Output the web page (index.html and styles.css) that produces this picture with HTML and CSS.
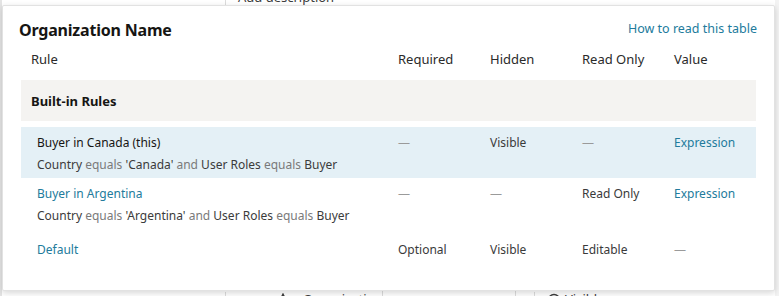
FILE: index.html
```html
<!DOCTYPE html>
<html lang="en">
<head>
<meta charset="utf-8">
<title>Organization Name</title>
<link rel="stylesheet" href="styles.css">
</head>
<body>
<div class="page">
  <div class="bg-strip bg-top">
    <div class="bg-cell"></div>
    <div class="bg-cell bg-desc">Add description</div>
  </div>
  <div class="bg-strip bg-bottom">
    <div class="bg-cell"></div>
    <div class="bg-cell bg-name">
      <svg class="bg-icon" width="14" height="14" viewBox="0 0 14 14"><path d="M7 1 L13 13 H1 Z" fill="none" stroke="#3d3d3d" stroke-width="1.3"/></svg>
      <span>Organization</span>
    </div>
    <div class="bg-cell"></div>
    <div class="bg-cell"></div>
    <div class="bg-cell bg-vis">
      <svg class="bg-icon" width="14" height="14" viewBox="0 0 14 14"><circle cx="7" cy="7" r="5.5" fill="none" stroke="#3d3d3d" stroke-width="1.4"/><circle cx="7" cy="7" r="2" fill="#3d3d3d"/></svg>
      <span>Visible</span>
    </div>
  </div>
</div>

<div class="popup">
  <div class="popup-head">
    <h2 class="popup-title">Organization Name</h2>
    <a class="link help-link" href="#">How to read this table</a>
  </div>
  <div class="rules">
    <div class="rules-row rules-header">
      <div class="cell cell-rule">Rule</div>
      <div class="cell">Required</div>
      <div class="cell">Hidden</div>
      <div class="cell">Read Only</div>
      <div class="cell">Value</div>
    </div>
    <div class="rules-group">Built-in Rules</div>
    <div class="rules-row rules-item is-current">
      <div class="cell cell-rule">
        <div class="rule-name">Buyer in Canada (this)</div>
        <div class="rule-cond">Country <span class="op">equals</span> 'Canada' <span class="op">and</span> User Roles <span class="op">equals</span> Buyer</div>
      </div>
      <div class="cell muted">—</div>
      <div class="cell">Visible</div>
      <div class="cell muted">—</div>
      <div class="cell"><a class="link" href="#">Expression</a></div>
    </div>
    <div class="rules-row rules-item">
      <div class="cell cell-rule">
        <a class="link rule-name" href="#">Buyer in Argentina</a>
        <div class="rule-cond">Country <span class="op">equals</span> 'Argentina' <span class="op">and</span> User Roles <span class="op">equals</span> Buyer</div>
      </div>
      <div class="cell muted">—</div>
      <div class="cell muted">—</div>
      <div class="cell">Read Only</div>
      <div class="cell"><a class="link" href="#">Expression</a></div>
    </div>
    <div class="rules-row rules-item rules-default">
      <div class="cell cell-rule">
        <a class="link rule-name" href="#">Default</a>
      </div>
      <div class="cell">Optional</div>
      <div class="cell">Visible</div>
      <div class="cell">Editable</div>
      <div class="cell muted">—</div>
    </div>
  </div>
</div>
</body>
</html>
```

FILE: styles.css
```css
* { box-sizing: border-box; }

html, body {
  margin: 0;
  padding: 0;
}

body {
  width: 779px;
  height: 296px;
  overflow: hidden;
  position: relative;
  background: #ffffff;
  font-family: "Noto Sans", "Open Sans", sans-serif;
  color: #161513;
}

/* ---------- page behind the popup ---------- */
.page {
  height: 296px;
  display: flex;
  flex-direction: column;
  justify-content: space-between;
  border-left: 2px solid #e4e4e4;
  border-right: 4px solid #f3f3f3;
}

.bg-strip {
  height: 6px;
  overflow: hidden;
  display: grid;
  font-size: 13px;
  line-height: 14px;
  color: #3d3d3d;
}

.bg-top {
  grid-template-columns: 223px 1fr;
}

.bg-bottom {
  grid-template-columns: 223px 157px 133px 19px 1fr;
}

.bg-cell {
  border-left: 1px solid #dcdcdc;
}

.bg-cell:first-child {
  border-left: 0;
}

.bg-desc {
  padding-left: 12px;
  margin-top: -10px;
}

.bg-name,
.bg-vis {
  display: flex;
  align-items: flex-start;
  margin-top: 2px;
}

.bg-name {
  padding-left: 50px;
  gap: 13px;
}

.bg-vis {
  padding-left: 12px;
  gap: 4px;
}

.bg-icon {
  flex: none;
  margin-top: 1px;
}

/* ---------- popup ---------- */
.popup {
  position: absolute;
  left: 2px;
  top: 5px;
  width: 773px;
  height: 286px;
  background: #ffffff;
  border: 1px solid #e2e2e2;
  border-radius: 2px;
  box-shadow: 0 2px 6px rgba(0, 0, 0, 0.16);
}

.popup-head {
  display: flex;
  justify-content: space-between;
  align-items: flex-start;
  padding: 14px 17px 0 16px;
}

.popup-title {
  margin: 0;
  font-size: 16px;
  line-height: 20px;
  font-weight: 700;
  letter-spacing: -0.2px;
}

.link {
  color: #227b9c;
  text-decoration: none;
}

.help-link {
  font-size: 12.5px;
  line-height: 20px;
  margin-top: -1px;
}

.rules {
  margin: 0 18px;
}

.rules-row {
  display: grid;
  grid-template-columns: 367px 92px 92px 92px 92px;
}

.cell {
  padding-left: 10px;
}

.rules-header {
  padding: 9px 0 11px;
  font-size: 13px;
  line-height: 20px;
  color: #2a2a2a;
}

.rules-group {
  background: #f4f3f1;
  padding: 11px 10px 10px;
  font-size: 13px;
  line-height: 20px;
  font-weight: 700;
}

.rules-item {
  font-size: 12px;
  line-height: 16px;
  padding: 8px 0 5px;
  color: #3a3a3a;
}

.rules-item .cell-rule {
  padding-left: 16px;
}

.is-current {
  margin-top: 6px;
  background: #e4f0f6;
}

.is-current .rule-name {
  color: #161513;
}

.rules-default {
  padding-top: 13px;
}

.rule-name {
  display: block;
}

.rule-cond {
  margin-top: 6px;
  color: #3b3b3b;
}

.op {
  color: #7a7a7a;
}

.muted {
  color: #9a9a9a;
}
```
